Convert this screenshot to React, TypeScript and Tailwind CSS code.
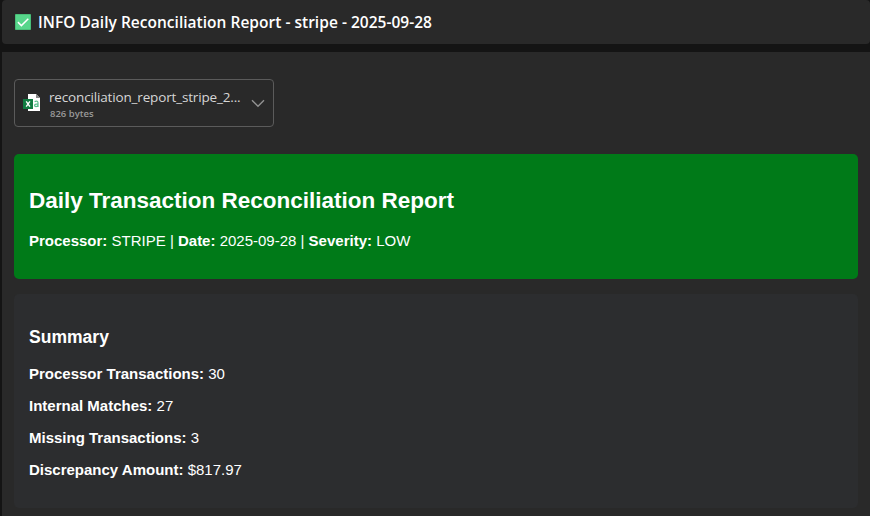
import React from "react";

const summary = [
  { label: "Processor Transactions:", value: "30" },
  { label: "Internal Matches:", value: "27" },
  { label: "Missing Transactions:", value: "3" },
  { label: "Discrepancy Amount:", value: "$817.97" },
];

function CheckBadge() {
  return (
    <svg width="16" height="16" viewBox="0 0 16 16" className="shrink-0">
      <rect width="16" height="16" rx="0.8" fill="#46ba73" />
      <rect x="0.8" y="0.8" width="14.4" height="14.4" fill="#57d68b" />
      <path d="M2.9 8.1l3.5 3.5 6.9-6.9" fill="none" stroke="#fff" strokeWidth="1.5" />
    </svg>
  );
}

function SpreadsheetIcon() {
  return (
    <svg width="18" height="18" viewBox="0 0 18 18" className="shrink-0">
      <path d="M5 0H13L17 4V17H5Z" fill="#fff" />
      <path d="M13 0V4H17Z" fill="#888" />
      <path d="M11.6 7.6c2.2-.9 3.4-.3 3.4 1.2v4.1M15 9.9c-2.2 0-3.4.3-3.4 1.5 0 1.6 2.6 1.6 3.4-.2" fill="none" stroke="#55bd8a" strokeWidth="1.2" />
      <rect x="0" y="5" width="10" height="10" fill="#107c41" />
      <path d="M3.2 7.3l3.7 5.4M6.9 7.3l-3.7 5.4" stroke="#fff" strokeWidth="1.4" />
    </svg>
  );
}

function Attachment() {
  return (
    <div className="flex h-12 w-[260px] items-center rounded border border-[#5b5b5b] pl-2 pr-[9px] font-['Open_Sans','Noto_Sans',sans-serif]">
      <SpreadsheetIcon />
      <div className="ml-2 w-[192px] shrink-0 whitespace-nowrap">
        <div className="mt-px h-[18px] text-[13.5px] leading-[18px] tracking-[-0.16px] text-[#d6d6d6]">reconciliation_report_stripe_2...</div>
        <div className="ml-px mt-[2px] h-[12px] text-[9.5px] font-semibold leading-[12px] text-[#999]">826 bytes</div>
      </div>
      <svg width="14" height="9" viewBox="0 0 14 9" className="ml-[10px] shrink-0">
        <path d="M1 1.2l6 6 6-6" fill="none" stroke="#929292" strokeWidth="1.4" />
      </svg>
    </div>
  );
}

export default function App() {
  return (
    <div className="flex h-[516px] w-[870px] flex-col gap-2 overflow-hidden bg-[#141414] pl-[2px] text-white">
      <header className="flex h-11 shrink-0 items-center gap-[7px] rounded bg-[#292929] pl-[13px] font-['Open_Sans','Noto_Sans',sans-serif]">
        <CheckBadge />
        <h1 className="whitespace-nowrap text-[15.5px] font-semibold leading-5 tracking-[0.02px]">
          INFO Daily Reconciliation Report - stripe - 2025-09-28
        </h1>
      </header>
      <main className="flex-1 bg-[#292929] px-3 pt-[27px] font-['Liberation_Sans',Arial,sans-serif] text-[15px] leading-[17px]">
        <Attachment />
        <section className="mt-[27px] h-[125px] rounded-[5px] bg-[#007a18] px-[15px] pt-[34px]">
          <h2 className="text-[22.5px] font-bold leading-[26px]">Daily Transaction Reconciliation Report</h2>
          <p className="mt-[18px]">
            <b>Processor:</b> STRIPE | <b>Date:</b> 2025-09-28 | <b>Severity:</b> LOW
          </p>
        </section>
        <section className="mt-[15px] h-[214px] rounded-[5px] bg-[#2c2d2f] px-[15px] pt-[33px]">
          <h3 className="text-[17.55px] font-bold leading-5">Summary</h3>
          <div className="mt-[18px] flex flex-col gap-[15px]">
            {summary.map((s) => (
              <p key={s.label}>
                <b>{s.label}</b> {s.value}
              </p>
            ))}
          </div>
        </section>
      </main>
    </div>
  );
}
